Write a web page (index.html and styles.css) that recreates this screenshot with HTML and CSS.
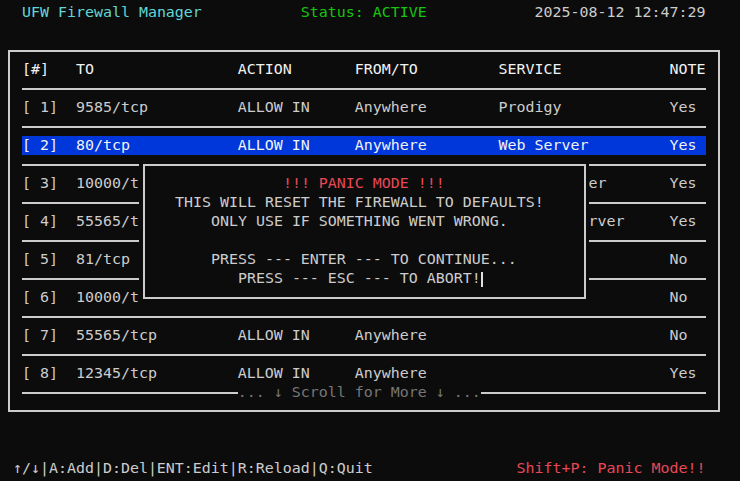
FILE: index.html
```html
<!DOCTYPE html>
<html>
<head>
<meta charset="utf-8">
<link rel="stylesheet" href="styles.css">
</head>
<body>
<div class="screen">
  <div class="line topbar">
    <span class="title">UFW Firewall Manager</span>
    <span class="status">Status: ACTIVE</span>
    <span class="clock">2025-08-12 12:47:29</span>
  </div>

  <div class="box">
    <div class="row head">
      <span>[#]</span><span>TO</span><span>ACTION</span><span>FROM/TO</span><span>SERVICE</span><span>NOTE</span>
    </div>
    <div class="sep"></div>
    <div class="row">
      <span>[ 1]</span><span>9585/tcp</span><span>ALLOW IN</span><span>Anywhere</span><span>Prodigy</span><span>Yes</span>
    </div>
    <div class="sep"></div>
    <div class="row selected">
      <span>[ 2]</span><span>80/tcp</span><span>ALLOW IN</span><span>Anywhere</span><span>Web Server</span><span>Yes</span>
    </div>
    <div class="sep"></div>
    <div class="row">
      <span>[ 3]</span><span>10000/tcp</span><span>ALLOW IN</span><span>Anywhere</span><span>File Manager</span><span>Yes</span>
    </div>
    <div class="sep"></div>
    <div class="row">
      <span>[ 4]</span><span>55565/tcp</span><span>ALLOW IN</span><span>Anywhere</span><span>Private Server</span><span>Yes</span>
    </div>
    <div class="sep"></div>
    <div class="row">
      <span>[ 5]</span><span>81/tcp</span><span>ALLOW IN</span><span>Anywhere</span><span></span><span>No</span>
    </div>
    <div class="sep"></div>
    <div class="row">
      <span>[ 6]</span><span>10000/tcp</span><span>ALLOW IN</span><span>Anywhere</span><span></span><span>No</span>
    </div>
    <div class="sep"></div>
    <div class="row">
      <span>[ 7]</span><span>55565/tcp</span><span>ALLOW IN</span><span>Anywhere</span><span></span><span>No</span>
    </div>
    <div class="sep"></div>
    <div class="row">
      <span>[ 8]</span><span>12345/tcp</span><span>ALLOW IN</span><span>Anywhere</span><span></span><span>Yes</span>
    </div>
    <div class="sep scroll"><span class="scroll-text">... ↓ Scroll for More ↓ ...</span></div>
  </div>

  <div class="line footer">
    <span class="keys">↑/↓|A:Add|D:Del|ENT:Edit|R:Reload|Q:Quit</span>
    <span class="panic-key">Shift+P: Panic Mode!!</span>
  </div>

  <div class="popup">
    <div class="popup-frame">
      <div class="line pl-15 alert">!!! PANIC MODE !!!</div>
      <div class="line pl-3">THIS WILL RESET THE FIREWALL TO DEFAULTS!</div>
      <div class="line pl-7">ONLY USE IF SOMETHING WENT WRONG.</div>
      <div class="line"></div>
      <div class="line pl-7">PRESS --- ENTER --- TO CONTINUE...</div>
      <div class="line pl-10">PRESS --- ESC --- TO ABORT!<span class="cursor"></span></div>
    </div>
  </div>
</div>
</body>
</html>
```

FILE: styles.css
```css
* { box-sizing: border-box; }

html, body {
  margin: 0;
  padding: 0;
  background: #0c0c0c;
}

body {
  width: 740px;
  height: 481px;
  overflow: hidden;
}

.screen {
  position: relative;
  padding: 3px 0 0 4px;
  font-family: "DejaVu Sans Mono", monospace;
  font-size: 14.95px;
  line-height: 19px;
  color: #cccccc;
  white-space: nowrap;
}

.line {
  height: 19px;
}

.topbar {
  display: grid;
  grid-template-columns: 31ch 26ch auto;
  padding-left: 2ch;
}

.title { color: #61d6d6; }
.status { color: #16c60c; }
.clock { color: #cccccc; }

.box {
  margin: 28px 0 0 3.5px;
  width: 712px;
  border: 2px solid #cccccc;
  padding: 8px 11.5px 8px 12.5px;
}

.row {
  display: grid;
  grid-template-columns: 6ch 18ch 13ch 16ch 19ch 4ch;
  height: 19px;
  overflow: hidden;
}

.row.head { color: #f2f2f2; }

.row.selected {
  background: #0037da;
  color: #f2f2f2;
}

.sep {
  display: flex;
  align-items: flex-start;
  height: 19px;
}

.sep::before,
.sep::after {
  content: "";
  margin-top: 9px;
  height: 2px;
  background: #cccccc;
}

.sep::before { flex: 1; }
.sep::after { display: none; }

.sep.scroll::before { flex: 0 0 24ch; }
.sep.scroll::after { display: block; flex: 1; }

.scroll-text { color: #767676; }

.footer {
  margin-top: 47px;
  display: grid;
  grid-template-columns: 56ch auto;
  padding-left: 1ch;
}

.keys { color: #cccccc; }
.panic-key { color: #e74856; }

.popup {
  position: absolute;
  left: 139px;
  top: 155px;
  width: 450px;
  height: 152px;
  background: #0c0c0c;
  padding: 9px 3.5px 8px 3.5px;
}

.popup-frame {
  height: 135px;
  border: 2px solid #cccccc;
  padding: 8px 3.5px 9px 3.5px;
}

.alert { color: #e74856; }

.pl-3 { padding-left: 3ch; }
.pl-7 { padding-left: 7ch; }
.pl-10 { padding-left: 10ch; }
.pl-15 { padding-left: 15ch; }

.cursor {
  display: inline-block;
  width: 2px;
  height: 15.5px;
  background: #e0e0e0;
  vertical-align: -4px;
}
```
